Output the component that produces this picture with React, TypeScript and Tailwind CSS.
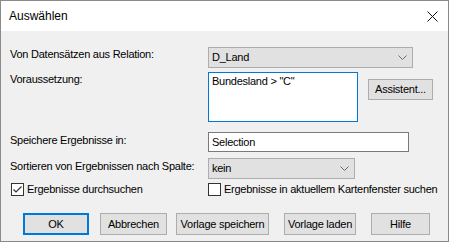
import React from "react";

const Chevron = () => (
  <svg width="9" height="5" viewBox="0 0 9 5" className="shrink-0">
    <path d="M0.5 0.5 L4.5 4.5 L8.5 0.5" fill="none" stroke="#6d6d6d" strokeWidth="1" />
  </svg>
);

const Btn = ({ label, w, ml, def }: { label: string; w: string; ml: string; def?: boolean }) => (
  <div
    className={`${w} ${ml} h-[22px] flex items-center justify-center bg-[#e1e1e1] ${
      def ? "border-2 border-[#0078d7]" : "border border-[#adadad]"
    } text-[11px] text-black whitespace-nowrap`}
  >
    {label}
  </div>
);

const CheckIcon = () => (
  <svg width="13" height="13" viewBox="0 0 13 13" className="shrink-0">
    <rect x="0.5" y="0.5" width="12" height="12" fill="#fff" stroke="#333" />
    <path d="M2.5 6.5 L5 9 L10.5 3.5" fill="none" stroke="#333" strokeWidth="1.2" />
  </svg>
);

const Box = () => (
  <svg width="13" height="13" viewBox="0 0 13 13" className="shrink-0">
    <rect x="0.5" y="0.5" width="12" height="12" fill="#fff" stroke="#333" />
  </svg>
);

export default function App() {
  return (
    <div
      className="w-[449px] h-[242px] border border-[#8a8a8a] flex flex-col bg-[#f0f0f0] text-black"
      style={{ fontFamily: '"Liberation Sans", Arial, sans-serif' }}
    >
      <div className="h-[30px] bg-white flex items-center justify-between pl-[8px] pr-[10px] shrink-0">
        <span className="text-[12px]">Auswählen</span>
        <svg width="11" height="11" viewBox="0 0 11 11">
          <path d="M0.5 0.5 L10.5 10.5 M10.5 0.5 L0.5 10.5" stroke="#111" strokeWidth="1" />
        </svg>
      </div>
      <div className="flex-1 flex flex-col pl-[9px] pt-[16px] text-[11px] leading-[13px] tracking-[-0.25px] whitespace-nowrap">
        <div className="flex items-start h-[21px]">
          <div className="w-[198px] pt-[1px]">Von Datensätzen aus Relation:</div>
          <div className="w-[205px] h-[21px] bg-[#e1e1e1] border border-[#adadad] flex items-center justify-between pl-[3px] pr-[5px]">
            <span>D_Land</span>
            <Chevron />
          </div>
        </div>
        <div className="flex items-start mt-[4px] h-[50px]">
          <div className="w-[198px] pt-[1px]">Voraussetzung:</div>
          <div className="w-[150px] h-[50px] bg-white border border-[#0078d7] pl-[3px] pt-[2px]">Bundesland &gt; "C"</div>
          <div className="ml-[10px] mt-[7px] w-[65px] h-[21px] bg-[#e1e1e1] border border-[#adadad] flex items-center justify-center">
            Assistent...
          </div>
        </div>
        <div className="flex items-start mt-[10px] h-[20px]">
          <div className="w-[198px] pt-[2px]">Speichere Ergebnisse in:</div>
          <div className="w-[201px] h-[20px] bg-white border border-[#7a7a7a] flex items-center pl-[3px]">Selection</div>
        </div>
        <div className="flex items-start mt-[6px] h-[21px]">
          <div className="w-[198px] pt-[2px]">Sortieren von Ergebnissen nach Spalte:</div>
          <div className="w-[147px] h-[21px] bg-[#e1e1e1] border border-[#adadad] flex items-center justify-between pl-[3px] pr-[5px]">
            <span>kein</span>
            <Chevron />
          </div>
        </div>
        <div className="flex items-center mt-[4px] h-[13px]">
          <div className="w-[198px] flex items-center pl-[1px]">
            <CheckIcon />
            <span className="ml-[3px]">Ergebnisse durchsuchen</span>
          </div>
          <div className="flex items-center">
            <Box />
            <span className="ml-[3px]">Ergebnisse in aktuellem Kartenfenster suchen</span>
          </div>
        </div>
        <div className="flex items-start mt-[17px]">
          <Btn label="OK" w="w-[66px]" ml="ml-[13px]" def />
          <Btn label="Abbrechen" w="w-[67px]" ml="ml-[11px]" />
          <Btn label="Vorlage speichern" w="w-[93px]" ml="ml-[9px]" />
          <Btn label="Vorlage laden" w="w-[72px]" ml="ml-[15px]" />
          <Btn label="Hilfe" w="w-[59px]" ml="ml-[15px]" />
        </div>
      </div>
    </div>
  );
}
